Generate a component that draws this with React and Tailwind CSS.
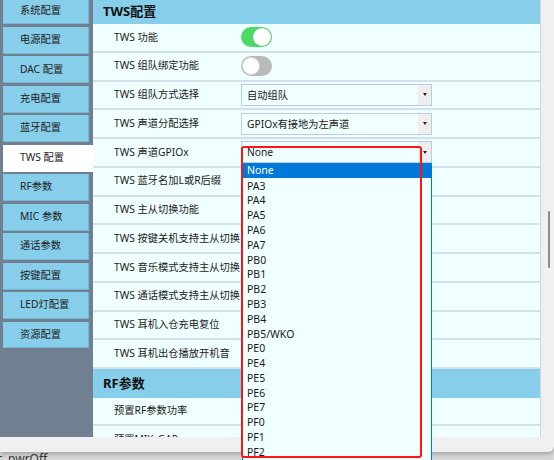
import { useState } from 'react';

const navItems = ['系统配置', '电源配置', 'DAC 配置', '充电配置', '蓝牙配置', 'TWS 配置', 'RF参数', 'MIC 参数', '通话参数', '按键配置', 'LED灯配置', '资源配置'];

const gpioOptions = ['PA3', 'PA4', 'PA5', 'PA6', 'PA7', 'PB0', 'PB1', 'PB2', 'PB3', 'PB4', 'PB5/WKO', 'PE0', 'PE4', 'PE5', 'PE6', 'PE7', 'PF0', 'PF1', 'PF2'];

function Toggle({ on }) {
    return on ? (
        <div className="w-[31px] h-[20px] rounded-full bg-[#4cd964] flex items-center justify-end pr-[1px]">
            <div className="w-[18px] h-[18px] rounded-full bg-white shadow-[0_0_1px_rgba(0,0,0,0.3)]" />
        </div>
    ) : (
        <div className="w-[31px] h-[20px] rounded-full bg-[#b9b9b9] flex items-center pl-[1px]">
            <div className="w-[18px] h-[18px] rounded-full bg-white border border-[#d6d6d6]" />
        </div>
    );
}

function Select({ value }) {
    return (
        <div className="w-[191px] h-[22px] border border-[#bccbdd] bg-[#f0ffff] flex items-center">
            <span className="flex-1 pl-[5px] text-[10.25px] text-[#1a1a1a] leading-none">{value}</span>
            <div className="w-[13px] h-full bg-[#eeeeee] flex items-center justify-center">
                <div className="w-0 h-0 border-x-[2.5px] border-x-transparent border-t-[3px] border-t-[#222]" />
            </div>
        </div>
    );
}

const rows = [
    { label: 'TWS 功能', control: <Toggle on /> },
    { label: 'TWS 组队绑定功能', control: <Toggle /> },
    { label: 'TWS 组队方式选择', control: <Select value="自动组队" /> },
    { label: 'TWS 声道分配选择', control: <Select value="GPIOx有接地为左声道" /> },
    { label: 'TWS 声道GPIOx', control: <Select value="None" /> },
    { label: 'TWS 蓝牙名加L或R后缀' },
    { label: 'TWS 主从切换功能' },
    { label: 'TWS 按键关机支持主从切换' },
    { label: 'TWS 音乐模式支持主从切换' },
    { label: 'TWS 通话模式支持主从切换' },
    { label: 'TWS 耳机入仓充电复位' },
    { label: 'TWS 耳机出仓播放开机音' },
];

function Row({ label, control }) {
    return (
        <div className="h-[28.75px] flex items-center border-b-2 border-[#d2dfec]">
            <div className="w-[148px] pl-[21px] text-[10.25px] text-[#1a1a1a] whitespace-nowrap overflow-hidden">{label}</div>
            {control}
        </div>
    );
}

export default function App() {
    const [active] = useState('TWS 配置');

    return (
        <div className="w-[554px] h-[460px] relative overflow-hidden bg-[#d6d7d8] font-['Noto_Sans','Noto_Sans_CJK_SC',sans-serif]">
            <div className="h-[452px] flex flex-col bg-[#f0f0f0] rounded-br-[6px] shadow-[0_2px_4px_rgba(0,0,0,0.25)] relative z-10">
                <div className="h-[437px] flex">
                    <aside className="w-[93px] bg-[#708090] pl-[3px] overflow-hidden">
                        <div className="flex flex-col gap-[2.7px] -mt-[2.67px]">
                            {navItems.map((item) => (
                                <div
                                    key={item}
                                    className={
                                        item === active
                                            ? 'w-[90px] h-[26.8px] bg-white flex items-center pl-[17px] text-[10.25px] text-[#222]'
                                            : 'w-[86px] h-[26.8px] bg-[#87ceeb] border-b border-r border-[#79b6d3] flex items-center pl-[17px] text-[10.25px] text-[#222]'
                                    }
                                >
                                    {item}
                                </div>
                            ))}
                        </div>
                    </aside>

                    <main className="w-[448px] bg-[#f0ffff] overflow-hidden border-r border-[#c9d7e6]">
                        <div className="h-[24px] bg-[#87ceeb] flex items-center pl-[10px] text-[13px] font-bold text-[#111]">TWS配置</div>
                        {rows.map((r) => (
                            <Row key={r.label} {...r} />
                        ))}
                        <div className="h-[28.5px] bg-[#87ceeb] flex items-center pl-[10px] text-[13px] font-bold text-[#111]">RF参数</div>
                        <Row label="预置RF参数功率" />
                        <Row label="预置MIX_GAP" />
                    </main>

                    <div className="w-[13px] pt-[211px] pl-[7px]">
                        <div className="w-[2px] h-[57px] rounded-full bg-[#8a8a8a]" />
                    </div>
                </div>
            </div>

            <div className="-ml-[3px] pt-[1px] text-[12px] text-[#333] leading-none">c_pwrOff</div>

            {/* open dropdown list */}
            <div className="absolute z-20 left-[242px] top-[163px] w-[190px] bg-[#f0ffff] border-x border-[#0078d7]">
                <div className="h-[15px] flex items-center pl-[4px] text-[10.5px] bg-[#0078d7] text-white">None</div>
                <div className="pt-[1px]">
                    {gpioOptions.map((opt) => (
                        <div key={opt} className="h-[14.8px] flex items-center pl-[4px] text-[10.5px] text-[#1a1a1a]">
                            {opt}
                        </div>
                    ))}
                </div>
            </div>

            {/* red annotation box */}
            <div className="absolute z-30 left-[241px] top-[146px] w-[181px] h-[312px] border-2 border-[#ff1414] rounded-[3px]" />
        </div>
    );
}
